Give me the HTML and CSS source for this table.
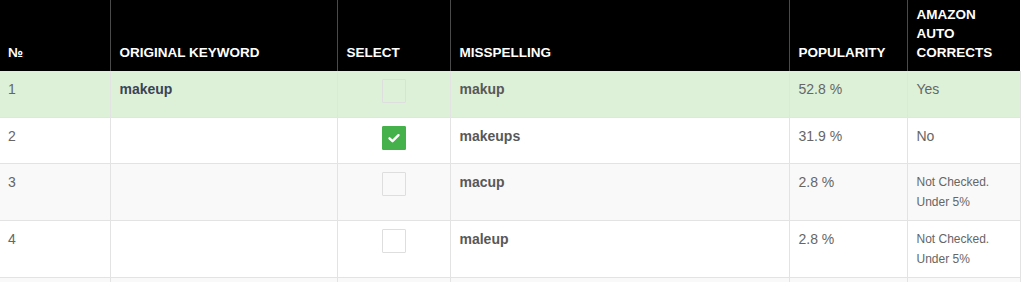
FILE: index.html
```html
<!DOCTYPE html>
<html lang="en">
<head>
    <meta charset="UTF-8">
    <meta name="viewport" content="width=device-width, initial-scale=1.0">
    <title>Misspellings</title>
    <link rel="stylesheet" href="styles.css">
</head>
<body>
    <table class="keywords">
        <colgroup>
            <col class="col-num">
            <col class="col-keyword">
            <col class="col-select">
            <col class="col-miss">
            <col class="col-pop">
            <col class="col-amazon">
        </colgroup>
        <thead>
            <tr>
                <th>№</th>
                <th>Original Keyword</th>
                <th>Select</th>
                <th>Misspelling</th>
                <th>Popularity</th>
                <th>Amazon Auto Corrects</th>
            </tr>
        </thead>
        <tbody>
            <tr class="success">
                <td>1</td>
                <td class="keyword">makeup</td>
                <td class="select"><span class="check"></span></td>
                <td class="miss">makup</td>
                <td>52.8 %</td>
                <td>Yes</td>
            </tr>
            <tr>
                <td>2</td>
                <td class="keyword"></td>
                <td class="select">
                    <span class="check checked">
                        <svg viewBox="0 0 24 24" width="24" height="24"><path d="M7.5 12.3l3 2.9 6-6" fill="none" stroke="#fff" stroke-width="2.4" stroke-linecap="round" stroke-linejoin="round"/></svg>
                    </span>
                </td>
                <td class="miss">makeups</td>
                <td>31.9 %</td>
                <td>No</td>
            </tr>
            <tr class="striped">
                <td>3</td>
                <td class="keyword"></td>
                <td class="select"><span class="check"></span></td>
                <td class="miss">macup</td>
                <td>2.8 %</td>
                <td class="note">Not Checked.<br>Under 5%</td>
            </tr>
            <tr>
                <td>4</td>
                <td class="keyword"></td>
                <td class="select"><span class="check"></span></td>
                <td class="miss">maleup</td>
                <td>2.8 %</td>
                <td class="note">Not Checked.<br>Under 5%</td>
            </tr>
            <tr class="striped empty">
                <td></td>
                <td class="keyword"></td>
                <td class="select"></td>
                <td class="miss"></td>
                <td></td>
                <td class="note"></td>
            </tr>
        </tbody>
    </table>
</body>
</html>
```

FILE: styles.css
```css
body {
    margin: 0;
    padding: 0;
    background: #fff;
    font-family: 'Liberation Sans', Arial, sans-serif;
    font-size: 14px;
    color: #666;
}
.keywords {
    width: 1020px;
    border-collapse: collapse;
    table-layout: fixed;
}
.col-num { width: 110px; }
.col-keyword { width: 227px; }
.col-select { width: 113px; }
.col-miss { width: 339px; }
.col-pop { width: 118px; }
.col-amazon { width: 113px; }
.keywords th {
    background: #000;
    color: #fff;
    font-size: 13.5px;
    font-weight: bold;
    text-transform: uppercase;
    text-align: left;
    vertical-align: bottom;
    line-height: 19px;
    padding: 5px 8px 9px 9px;
    border-left: 1px solid #4a4a4a;
}
.keywords th:first-child {
    border-left: none;
    padding-left: 8px;
}
.keywords td {
    padding: 8px 8px 8px 9px;
    line-height: 20px;
    vertical-align: top;
    border: 1px solid #e3e3e3;
    border-top: none;
}
.keywords td:first-child {
    border-left: none;
    padding-left: 8px;
}
.keywords tr.success td {
    background: #dcf1d8;
}
.keywords tr.striped td {
    background: #f9f9f9;
}
.keywords tr.empty td {
    height: 40px;
}
.keywords .keyword {
    font-weight: bold;
    color: #3b4357;
}
.keywords .miss {
    font-weight: bold;
    color: #585858;
}
.keywords .note {
    font-size: 12px;
}
.keywords .select {
    padding-bottom: 13px;
}
.keywords tr.success .select {
    padding-bottom: 14px;
}
.check {
    display: block;
    width: 22px;
    height: 22px;
    margin: 0 auto;
    border: 1px solid #dedede;
    border-radius: 1px;
}
.check.checked {
    background: #45b14a;
    border-color: #45b14a;
}
.check svg {
    display: block;
    margin: -1px;
}
```
